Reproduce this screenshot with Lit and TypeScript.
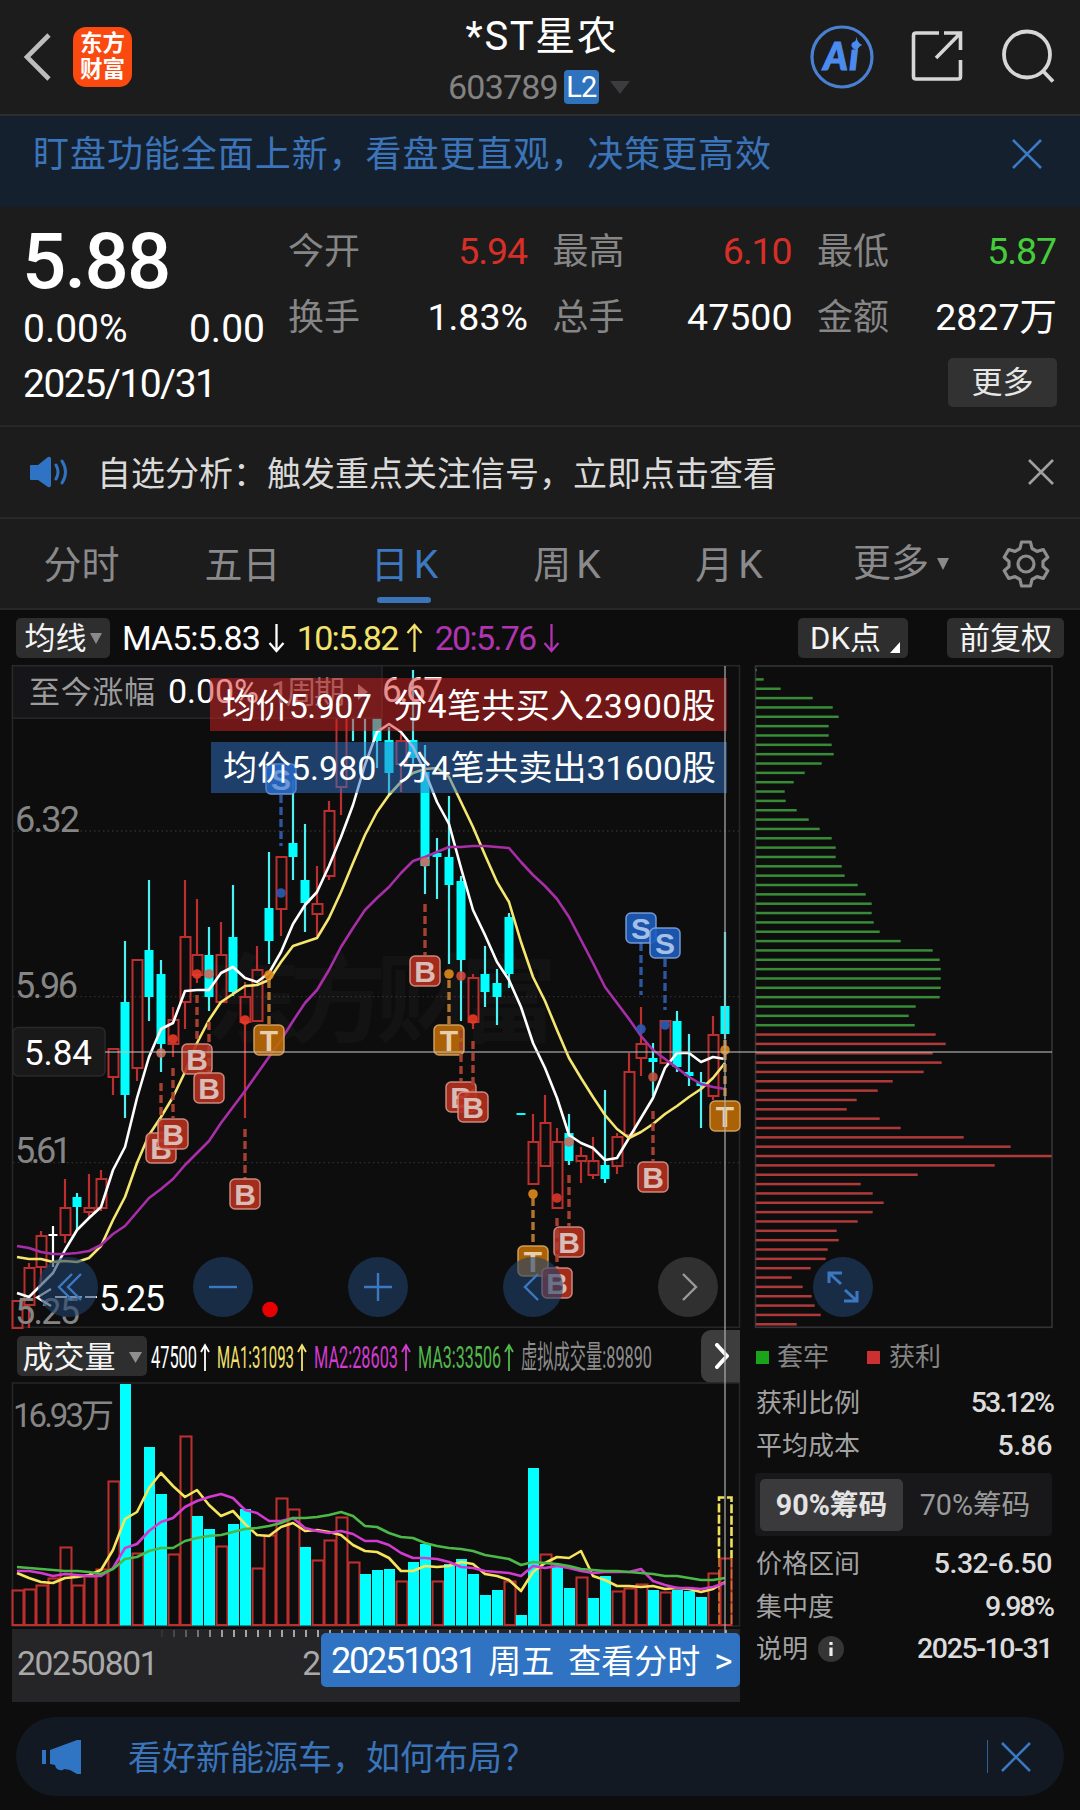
import { LitElement, html, svg, css } from "lit";
import { customElement } from "lit/decorators.js";

const X0 = 17;
const STEP = 12;
const xAt = (i: number) => X0 + STEP * i;

/* kind (r = hollow rise, c = filled fall, w = doji), high, body top, body bottom, low */
type Candle = [string, number, number, number, number];
const CANDLES: Candle[] = [
  ["r", 1300, 1300, 1328, 1328], ["r", 1263, 1267, 1305, 1328], ["r", 1231, 1235, 1267, 1283], ["w", 1226, 1234, 1236, 1267],
  ["r", 1179, 1207, 1235, 1243], ["c", 1193, 1197, 1207, 1230], ["r", 1174, 1207, 1212, 1217], ["r", 1170, 1178, 1208, 1211],
  ["r", 1048, 1048, 1077, 1095], ["c", 941, 1002, 1095, 1118], ["r", 959, 959, 1068, 1081], ["c", 880, 950, 997, 1021],
  ["c", 960, 974, 1044, 1072], ["r", 1007, 1019, 1044, 1057], ["r", 880, 936, 1002, 1029], ["r", 899, 954, 975, 983],
  ["c", 927, 955, 997, 1011], ["r", 922, 954, 1002, 1002], ["c", 885, 937, 992, 996], ["r", 982, 996, 1022, 1118],
  ["r", 946, 969, 1021, 1021], ["c", 852, 908, 941, 964], ["r", 856, 856, 909, 936], ["c", 780, 843, 857, 880],
  ["c", 824, 880, 903, 932], ["r", 866, 903, 914, 936], ["r", 801, 810, 876, 880], ["r", 700, 700, 787, 815],
  ["c", 700, 700, 705, 741], ["c", 700, 700, 705, 756], ["c", 700, 700, 741, 768], ["c", 727, 740, 773, 794],
  ["r", 732, 740, 764, 792], ["c", 670, 740, 758, 766], ["c", 745, 772, 866, 894], ["c", 838, 853, 857, 899],
  ["c", 796, 857, 885, 964], ["c", 876, 881, 960, 1021], ["r", 974, 977, 1022, 1029], ["c", 946, 974, 992, 1007],
  ["c", 969, 983, 997, 1025], ["c", 913, 917, 974, 988], ["c", 1113, 1113, 1115, 1115], ["r", 1114, 1141, 1184, 1184],
  ["r", 1095, 1122, 1166, 1166], ["r", 1128, 1141, 1208, 1208], ["c", 1114, 1133, 1161, 1165], ["r", 1147, 1155, 1161, 1183],
  ["r", 1137, 1160, 1175, 1179], ["c", 1090, 1165, 1179, 1183], ["r", 1133, 1136, 1166, 1174], ["r", 1053, 1071, 1135, 1135],
  ["r", 1007, 1043, 1058, 1076], ["c", 1043, 1058, 1062, 1096], ["r", 1020, 1020, 1063, 1063], ["c", 1011, 1021, 1067, 1072],
  ["c", 1034, 1072, 1076, 1086], ["c", 1072, 1082, 1086, 1128], ["r", 1016, 1034, 1096, 1100], ["c", 932, 1006, 1034, 1039],
];

const MA5 = [1293, 1297, 1285, 1273, 1250, 1230, 1218, 1207, 1170, 1147, 1098, 1057, 1029, 1023, 991, 990, 990, 973, 967, 978, 982, 973, 952, 924, 905, 892, 866, 837, 805, 765, 732, 724, 732, 747, 772, 802, 824, 868, 910, 935, 962, 980, 1007, 1043, 1068, 1098, 1135, 1143, 1148, 1160, 1158, 1138, 1118, 1098, 1068, 1053, 1053, 1062, 1057, 1059];
const MA10 = [1257, 1259, 1259, 1262, 1261, 1262, 1258, 1246, 1220, 1197, 1163, 1135, 1117, 1097, 1072, 1043, 1020, 1002, 994, 986, 985, 980, 962, 946, 942, 938, 918, 892, 863, 835, 812, 795, 782, 773, 769, 768, 777, 802, 827, 855, 882, 902, 942, 977, 1001, 1030, 1058, 1078, 1097, 1115, 1129, 1138, 1132, 1124, 1114, 1106, 1097, 1089, 1078, 1063];
const MA20 = [1246, 1248, 1252, 1254, 1254, 1253, 1251, 1245, 1234, 1226, 1212, 1198, 1189, 1179, 1165, 1153, 1141, 1123, 1107, 1091, 1074, 1057, 1040, 1021, 1003, 990, 970, 947, 928, 910, 898, 887, 873, 861, 857, 852, 847, 847, 846, 846, 847, 848, 862, 875, 886, 899, 917, 940, 963, 987, 1003, 1019, 1036, 1050, 1059, 1068, 1077, 1084, 1087, 1089];

const VOLUMES: [string, number][] = [
  ["r", 1590], ["r", 1589], ["r", 1585], ["r", 1578], ["r", 1547], ["r", 1585], ["r", 1576], ["r", 1569], ["r", 1481], ["c", 1384],
  ["r", 1553], ["c", 1447], ["c", 1494], ["r", 1554], ["r", 1436], ["c", 1516], ["c", 1529], ["r", 1546], ["c", 1524], ["c", 1509],
  ["r", 1568], ["r", 1535], ["r", 1498], ["r", 1509], ["c", 1547], ["r", 1560], ["r", 1540], ["r", 1517], ["r", 1562], ["c", 1574],
  ["c", 1570], ["c", 1569], ["r", 1581], ["c", 1562], ["c", 1544], ["r", 1581], ["c", 1564], ["c", 1559], ["c", 1574], ["c", 1595],
  ["c", 1590], ["r", 1581], ["c", 1615], ["c", 1468], ["r", 1554], ["c", 1566], ["c", 1588], ["r", 1577], ["c", 1598], ["c", 1576],
  ["r", 1591], ["r", 1588], ["r", 1584], ["c", 1590], ["r", 1592], ["c", 1590], ["c", 1591], ["c", 1597], ["r", 1573], ["r", 1558],
];
const VMA1 = [1573, 1578, 1582, 1583, 1578, 1577, 1575, 1570, 1550, 1519, 1512, 1488, 1473, 1486, 1497, 1490, 1505, 1516, 1511, 1524, 1535, 1536, 1527, 1523, 1531, 1530, 1532, 1535, 1545, 1551, 1552, 1558, 1571, 1571, 1566, 1567, 1566, 1562, 1564, 1574, 1576, 1580, 1591, 1572, 1563, 1557, 1558, 1551, 1576, 1580, 1586, 1586, 1587, 1586, 1589, 1588, 1589, 1592, 1589, 1582];
const VMA2 = [1571, 1571, 1573, 1576, 1574, 1575, 1576, 1576, 1568, 1548, 1544, 1531, 1522, 1518, 1507, 1501, 1497, 1494, 1498, 1510, 1513, 1521, 1521, 1518, 1528, 1531, 1533, 1531, 1534, 1541, 1541, 1545, 1553, 1558, 1558, 1559, 1562, 1567, 1568, 1571, 1572, 1573, 1576, 1566, 1568, 1566, 1568, 1571, 1573, 1572, 1572, 1572, 1569, 1581, 1585, 1588, 1588, 1589, 1587, 1583];
const VMA3 = [1567, 1568, 1569, 1570, 1571, 1571, 1572, 1574, 1569, 1559, 1557, 1551, 1548, 1548, 1541, 1538, 1536, 1535, 1532, 1529, 1528, 1526, 1523, 1518, 1518, 1517, 1515, 1512, 1516, 1526, 1527, 1533, 1537, 1538, 1543, 1546, 1548, 1549, 1551, 1555, 1557, 1559, 1565, 1562, 1563, 1564, 1566, 1569, 1570, 1571, 1571, 1572, 1573, 1574, 1576, 1576, 1578, 1580, 1580, 1578];

/* letter, candle index, badge centre, dash start, dash end, dot height, dot colour */
type Mark = [string, number, number, number, number, number, string];
const ON_RISE = "#ea3a26";
const ON_FALL = "#c9695a";
const MARKS: Mark[] = [
  ["B", 12, 1148, 1083, 1133, 1053, ON_FALL],
  ["B", 13, 1134, 1068, 1118, 1039, ON_RISE],
  ["B", 15, 1059, 995, 1043, 974, ON_RISE],
  ["B", 16, 1088, 1022, 1073, 974, ON_FALL],
  ["B", 19, 1194, 1129, 1179, 1020, ON_RISE],
  ["T", 21, 1040, 980, 1025, 975, "#e08a1a"],
  ["S", 22, 779, 795, 846, 893, "#2c5cb4"],
  ["B", 34, 971, 904, 955, 862, ON_FALL],
  ["T", 36, 1040, 980, 1025, 974, "#e08a1a"],
  ["B", 37, 1097, 1030, 1081, 976, "#d4483a"],
  ["B", 38, 1107, 1041, 1091, 1019, ON_RISE],
  ["T", 43, 1261, 1198, 1245, 1194, "#e08a1a"],
  ["B", 46, 1242, 1175, 1226, 1142, ON_FALL],
  ["B", 45, 1283, 1218, 1268, 1198, "#d8362a"],
  ["S", 52, 928, 943, 995, 1029, "#2c5cb4"],
  ["S", 54, 943, 959, 1010, 1025, "#2c5cb4"],
  ["B", 53, 1177, 1111, 1161, 1077, "#c0503e"],
  ["T", 59, 1116, 1040, 1100, 1050, "#e08a1a"],
];
const MARK_FILL: Record<string, string> = { B: "#b5301f", T: "#bd6a05", S: "#1c5dbd" };
const MARK_EDGE: Record<string, string> = { B: "#d6968c", T: "#d9a766", S: "#7fa3dc" };
const DASH: Record<string, string> = { B: "#a8402f", T: "#b3742e", S: "#2b56a0" };

const LOCKED = [1, 8, 25, 57, 77, 83, 73, 73, 76, 78, 66, 49, 38, 29, 30, 41, 53, 64, 76, 80, 80, 86, 89, 102, 110, 116, 116, 118, 124, 145, 177, 184, 185, 185, 185, 184, 160, 153, 159];
const PROFIT = [180, 190, 177, 186, 168, 137, 122, 101, 91, 124, 145, 208, 255, 296, 239, 162, 105, 117, 128, 117, 102, 81, 83, 72, 70, 55, 36, 47, 56, 59, 65, 41];

const points = (ys: number[]) => ys.map((y, i) => `${xAt(i)},${y}`).join(" ");

@customElement("price-chart")
class PriceChart extends LitElement {
  static styles = css`
    :host { display: block; }
    svg { display: block; }
    text { font-family: Roboto, "Noto Sans CJK SC", sans-serif; }
    .line { fill: none; stroke-width: 2.6; stroke-linejoin: round; }
    .axis { font-size: 36px; fill: #858585; }
    .grid { stroke: #2e2e2e; stroke-width: 1.3; stroke-dasharray: 1.5 3; }
    .frame { fill: none; stroke: #262628; stroke-width: 1.6; }
    .mark { font-family: "Liberation Sans", sans-serif; font-size: 30px; font-weight: 700; fill: #d9bcb6; text-anchor: middle; }
    .mark.S { fill: #a6bfe6; }
    .mark.T { fill: #e6cfae; }
    .watermark { font-size: 96px; font-weight: 700; fill: #fff; opacity: 0.022; }
  `;

  private candle([kind, high, top, bottom, low]: Candle, i: number) {
    const x = xAt(i);
    if (kind === "w") {
      return svg`<path d="M${x} ${high}V${low}M${x - 4.5} 1235H${x + 4.5}" stroke="#fff" stroke-width="2.2" fill="none"/>`;
    }
    if (kind === "c") {
      return svg`<path d="M${x} ${high}V${low}" stroke="#4df3f3" stroke-width="2.2"/>
        <rect x=${x - 4.5} y=${top} width="9" height=${bottom - top} fill="#0ff"/>`;
    }
    return svg`<path d="M${x} ${high}V${top}M${x} ${bottom}V${low}" stroke="#bb2f2f" stroke-width="2.2"/>
      <rect x=${x - 4.5} y=${top + 1} width="10" height=${bottom - top - 1} fill="none" stroke="#bb2f2f" stroke-width="2"/>`;
  }

  private mark([letter, i, cy, from, to, dot, color]: Mark) {
    const x = xAt(i);
    return svg`<path d="M${x} ${from}V${to}" stroke=${DASH[letter]} stroke-width="3.4" stroke-dasharray="8 4"/>
      <circle cx=${x} cy=${dot} r="4.8" fill=${color} opacity=".9"/>
      <rect x=${x - 15} y=${cy - 15} width="30" height="30" rx="5" fill=${MARK_FILL[letter]} stroke=${MARK_EDGE[letter]}
        stroke-width="1.5" fill-opacity=".9" stroke-opacity=".9"/>
      <text class="mark ${letter}" x=${x} y=${cy + 10.8}>${letter}</text>`;
  }

  render() {
    return html`<svg width="742" height="670" viewBox="0 660 742 670">
      <rect class="frame" x="12.5" y="665.7" width="727" height="661.6" />
      <path class="grid" d="M13 831H739M13 996.7H739M13 1162.7H739" />
      <text class="watermark" x="205" y="1034" textLength="352">东方财富</text>
      ${CANDLES.map((c, i) => this.candle(c, i))}
      <polyline class="line" points=${points(MA5)} stroke="#fff" />
      <polyline class="line" points=${points(MA10)} stroke="#f5e670" />
      <polyline class="line" points=${points(MA20)} stroke="#a82ea8" />
      <rect x="12.5" y="665.7" width="369.5" height="52.5" fill="#161618" stroke="#29292b" stroke-width="1.4" />
      <text x="29" y="703" font-size="31" fill="#9c9c9c" textLength="126">至今涨幅</text>
      <text x="168" y="702.5" font-size="34" fill="#fff" textLength="91">0.00%</text>
      <text x="271" y="703" font-size="31" fill="#8f8f8f" textLength="74">1周期</text>
      <path d="M358 684L368 692L358 700Z" fill="#9a9a9a" />
      <text x="382" y="702" font-size="35" fill="#fff" textLength="61">6.67</text>
      ${[["6.32", 831.5, 65], ["5.96", 997.5, 63], ["5.61", 1162.5, 57], ["5.25", 1324, 65]].map(
        ([t, y, w]) => svg`<text class="axis" x="15" y=${y} textLength=${w}>${t}</text>`,
      )}
      <path d="M51 1289L37 1297.5L51 1306" stroke="#fff" stroke-width="2.2" fill="none" />
      <path d="M55 1297H98" stroke="#fff" stroke-width="2.2" stroke-dasharray="12 3" />
      <text x="99" y="1311" font-size="36" fill="#fff" textLength="66">5.25</text>
      ${MARKS.map((m) => this.mark(m))}
      <rect x="13" y="1027.5" width="92" height="48.5" rx="5" fill="#19191a" stroke="#29292b" stroke-width="1.5" />
      <text x="24" y="1064.5" font-size="35" fill="#fff" textLength="68">5.84</text>
      <circle cx="270" cy="1309.5" r="7.8" fill="#e80000" />
    </svg>`;
  }
}

@customElement("volume-chart")
class VolumeChart extends LitElement {
  static styles = css`
    :host { display: block; }
    svg { display: block; }
    text { font-family: Roboto, "Noto Sans CJK SC", sans-serif; }
    .line { fill: none; stroke-width: 2.6; stroke-linejoin: round; }
  `;

  render() {
    return html`<svg width="742" height="247" viewBox="0 1382 742 247">
      <rect x="12.5" y="1383" width="727" height="243" fill="none" stroke="#262628" stroke-width="1.6" />
      ${VOLUMES.map(([kind, y], i) => {
        const x = xAt(i);
        return kind === "c"
          ? svg`<rect x=${x - 5} y=${y} width="11" height=${1625.5 - y} fill="#0ff"/>`
          : svg`<rect x=${x - 4.5} y=${y + 0.5} width="11" height=${1624.5 - y} fill="none" stroke="#bb2f2f" stroke-width="2.1"/>`;
      })}
      <path d="M719 1558V1497.5H731.5V1558" stroke="#f0e05a" stroke-width="2.6" fill="none" stroke-dasharray="9 2.4" />
      <path d="M719 1558V1625M731.5 1558V1625" stroke="#d07a30" stroke-width="1.6" fill="none" stroke-dasharray="9 2.4" />
      <polyline class="line" points=${points(VMA1)} stroke="#f5e45c" />
      <polyline class="line" points=${points(VMA2)} stroke="#d33bd0" />
      <polyline class="line" points=${points(VMA3)} stroke="#4cb848" />
      <text x="13" y="1426.500" font-size="33" fill="#858585" textLength="101">16.93万</text>
    </svg>`;
  }
}

@customElement("chip-distribution")
class ChipDistribution extends LitElement {
  static styles = css`
    :host { display: block; }
    svg { display: block; }
  `;

  render() {
    const bar = (color: string, offset: number) => (w: number, i: number) =>
      svg`<rect x="755.7" y=${668.8 + 9.346 * (i + offset)} width=${w} height="2.5" fill=${color}/>`;
    return html`<svg width="300" height="670" viewBox="754 660 300 670">
      <rect x="755.5" y="666" width="296.5" height="661.3" fill="none" stroke="#343436" stroke-width="1.6" />
      ${LOCKED.map(bar("#388c38", 0))} ${PROFIT.map(bar("#b03a3a", LOCKED.length))}
    </svg>`;
  }
}

@customElement("app-root")
class AppRoot extends LitElement {
  static styles = css`
    :host {
      display: block; width: 1080px; height: 1810px; overflow: hidden; background: #0d0d0d; color: #fff;
      font-family: Roboto, "Noto Sans CJK SC", sans-serif; line-height: 1; white-space: nowrap;
    }
    * { box-sizing: border-box; }
    svg { display: block; flex: none; }
    .head { height: 116px; background: #1c1c1c; border-bottom: 2px solid #2b2d2e; display: grid; grid-template-columns: 360px 1fr 360px; }
    .left { display: flex; align-items: center; padding-left: 22px; gap: 21px; }
    .logo {
      width: 59px; height: 60px; border-radius: 13px; background: #fb4a0f; font-weight: 700; font-size: 22.5px; line-height: 26px;
      text-align: center; white-space: pre-line; padding-top: 3px;
    }
    .title { display: flex; flex-direction: column; align-items: center; padding-top: 16px; }
    .name { font-size: 40px; line-height: 42px; letter-spacing: 1.6px; padding-left: 4px; }
    .code { display: flex; align-items: center; font-size: 34px; color: #828282; margin-top: 12px; line-height: 34px; letter-spacing: -0.8px; margin-right: 2px; }
    .l2 { background: #2f72bd; color: #fff; border-radius: 4px; font-size: 29px; width: 35px; height: 34px; text-align: center; margin-left: 6px; }
    .caret { width: 0; height: 0; border: 10px solid transparent; border-top: 13px solid #3c3c3e; border-bottom: 0; margin-left: 11px; }
    .right { display: flex; align-items: center; justify-content: flex-end; padding: 0 25px 3px 0; gap: 38px; }
    .ai { margin: 2px -1px 0 0; }
    .banner { height: 91px; background: #15202e; display: flex; justify-content: space-between; padding: 21px 38px 0 33px; color: #3c74b9; font-size: 36px; line-height: 36px; letter-spacing: 0.95px; }
    .banner svg { margin-top: 2px; }
    .quote { height: 220px; background: #1c1c1c; border-bottom: 2px solid #272727; display: grid; grid-template-columns: 265px 1fr; padding: 0 23px 0 23px; }
    .price { font-size: 78px; font-weight: 500; line-height: 78px; margin: 16px 0 0 -1px; letter-spacing: -1.8px; }
    .change { display: flex; justify-content: space-between; width: 242px; font-size: 39px; line-height: 40px; margin-top: 8px; }
    .day { font-size: 39px; line-height: 40px; margin-top: 15px; letter-spacing: -1.5px; }
    .stats { display: grid; grid-template-columns: 240px 240px 240px; column-gap: 24.5px; grid-template-rows: 66px 66px; padding-top: 12px; }
    .stat { display: flex; justify-content: space-between; align-items: center; font-size: 37.5px; }
    .stat span { font-size: 36px; color: #868686; }
    .stat .tight { letter-spacing: -1.1px; padding-right: 1px; }
    .rise { color: #d62f27; }
    .fall { color: #45cc3a; }
    .more { width: 109px; height: 49px; border-radius: 5px; background: #323233; color: #e6e6e6; font-size: 31px; line-height: 49px; text-align: center; margin: 7px 0 0 auto; }
    .notice { height: 92px; background: #1c1c1c; border-bottom: 2px solid #292929; display: flex; align-items: center; padding: 0 26px 0 29px; }
    .notice p { margin: 0 auto 0 28px; padding-top: 3px; font-size: 34px; color: #dadada; }
    .tabs { height: 91px; background: #1c1c1c; border-bottom: 2px solid #272727; position: relative; display: grid; grid-template-columns: 161px 161px 163px 162px 162px 161px 1fr; padding-left: 1px; align-items: center; }
    .tab { text-align: center; font-size: 38px; color: #8a8a8c; height: 89px; line-height: 93px; }
    .tab i { font-style: normal; margin-left: 5px; font-size: 39px; }
    .tab.on { color: #3c79c2; position: relative; }
    .tab.on::after { content: ""; position: absolute; left: 54px; bottom: 5px; width: 54px; height: 6px; border-radius: 3px; background: #3c74b9; }
    .tab.drop { display: flex; align-items: center; justify-content: flex-end; gap: 8px; width: 139px; }
    .gear { justify-self: center; }
    .indicators { height: 50px; display: flex; align-items: center; padding: 5px 16px 0; font-size: 34px; }
    .chip { height: 40px; border-radius: 5px; background: #2e2e2f; display: flex; align-items: center; justify-content: center; font-size: 31px; color: #f4f4f4; padding-top: 2px; }
    .ma { display: flex; align-items: center; gap: 8px; letter-spacing: -1px; padding-top: 1px; }
    .avg { width: 94px; gap: 3px; margin-right: 12px; }
    .ma.yellow { color: #f3e26c; margin: 0 12px; letter-spacing: -1.7px; }
    .ma.purple { color: #b034b0; letter-spacing: -1.7px; }
    .dk { width: 110px; margin: 0 39px 0 auto; gap: 9px; padding-left: 4px; }
    .dk svg { margin-top: 17px; }
    .adjust { width: 117px; }
    .body { display: grid; grid-template-columns: 754px 300px; position: relative; }
    .volrow { height: 52px; display: flex; align-items: center; padding-left: 17px; }
    .volname { width: 130px; gap: 13px; }
    .volnext { width: 39px; height: 53px; background: #3d3d3d; border-radius: 10px 0 0 10px; display: grid; place-items: center; padding-left: 3px; }
    .vals text { font-family: Roboto, "Noto Sans CJK SC", sans-serif; font-size: 32px; }
    .ruler { margin-left: 12px; width: 728px; height: 73px; background: #252527; color: #a9a9a9; font-size: 33.5px; display: flex; flex-direction: column; }
    .dates { display: flex; gap: 145px; padding: 6px 0 0 5px; letter-spacing: -1.3px; line-height: 40px; }
    .over { position: absolute; }
    .hline { left: 105px; top: 391px; width: 947px; height: 2px; background: rgba(190, 190, 190, 0.55); }
    .vline { left: 724px; top: 6px; width: 2px; height: 967px; background: rgba(175, 175, 175, 0.6); }
    .trade { display: flex; justify-content: space-between; align-items: center; font-size: 34px; color: #fff; }
    .buy { left: 210px; top: 18px; width: 517px; height: 53px; background: rgba(216, 34, 34, 0.5); padding: 2px 11px 0 12px; }
    .buy b:first-child { letter-spacing: -0.6px; }
    .buy b:last-child { letter-spacing: 0.35px; }
    .sell { left: 211px; top: 82px; width: 516px; height: 51px; background: rgba(47, 113, 199, 0.5); padding: 0 11px 0 12px; }
    .trade b { font-weight: 400; }
    .tools { left: 38px; top: 597px; display: flex; gap: 95px; }
    .round { width: 60px; height: 60px; border-radius: 50%; background: rgba(32, 65, 108, 0.6); display: grid; place-items: center; }
    .round.grey { background: rgba(60, 60, 60, 0.75); }
    .tag { left: 321px; top: 973px; width: 419px; height: 54px; border-radius: 5px; background: #2f73c2; font-size: 33px; display: flex; align-items: center; padding: 2px 0 0 10px; gap: 14px; }
    .tag .num { font-size: 36px; letter-spacing: -2.2px; margin-right: -1px; }
    .tag .go { font-size: 35px; }
    .legend { display: flex; align-items: center; height: 52px; padding: 2px 0 0 2px; font-size: 26px; color: #858585; }
    .legend u { width: 13px; height: 13px; background: #1aa41a; margin-right: 8px; }
    .legend .won { background: #cc3030; margin-left: 38px; margin-right: 9px; }
    .row { display: flex; align-items: center; justify-content: space-between; height: 42.5px; padding: 0 0 0 2px; font-size: 26px; color: #a2a2a2; width: 298px; }
    .row b { font-size: 28.5px; font-weight: 500; color: #dcdcdc; letter-spacing: -0.5px; }
    .row .pct { letter-spacing: -1.9px; margin-right: -1px; }
    .row .date { letter-spacing: -1.4px; }
    .note { display: flex; align-items: center; gap: 10px; }
    .switch { margin: 6px 0 7px 1px; width: 297px; height: 63px; padding: 6px 5px; border-radius: 4px; background: #18181a; display: grid; grid-template-columns: 143px 1fr; font-size: 28.7px; color: #9a9a9a; line-height: 52px; text-align: center; }
    .switch .on { border-radius: 5px; background: #3a3a3c; color: #e3e3e3; font-weight: 700; }
    .ad { margin: 15px 16px 0; height: 79px; border-radius: 40px; background: #121922; color: #3a74ba; display: flex; align-items: center; padding: 0 33px 0 26px; font-size: 34px; }
    .ad p { margin: 0 auto 0 47px; padding-top: 3px; }
    .sep { width: 1.5px; height: 33px; background: #2f6096; margin-right: 13px; }
  `;

  private cross(size: number, color: string, w = 2.6) {
    return html`<svg width=${size} height=${size} viewBox="0 0 ${size} ${size}">
      <path d="M1 1L${size - 1} ${size - 1}M${size - 1} 1L1 ${size - 1}" stroke=${color} stroke-width=${w} />
    </svg>`;
  }

  private arrow(up: boolean) {
    return html`<svg width="17" height="30" viewBox="0 0 17 30" fill="none" stroke="currentColor" stroke-width="2.3">
      <path d=${up ? "M8.5 29V3M1.5 10L8.5 2L15.5 10" : "M8.5 1V27M1.5 20L8.5 28L15.5 20"} />
    </svg>`;
  }

  private reading(text: string, x: number, w: number, arrowX: number, color: string) {
    return svg`<text x=${x} y="38" textLength=${w} lengthAdjust="spacingAndGlyphs" fill=${color}>${text}</text>
      ${arrowX ? svg`<path d="M${arrowX} 41V16M${arrowX - 4} 22L${arrowX} 15L${arrowX + 4} 22" stroke=${color} stroke-width="1.8" fill="none"/>` : ""}`;
  }

  private stat(label: string, value: string, cls = "") {
    return html`<div class="stat"><span>${label}</span><div class=${cls}>${value}</div></div>`;
  }

  private round(icon: unknown, grey = false) {
    return html`<div class="round ${grey ? "grey" : ""}">
      <svg width="34" height="34" viewBox="0 0 34 34" fill="none" stroke=${grey ? "#9a9a9a" : "#3c78c2"} stroke-width="2.4">${icon}</svg>
    </div>`;
  }

  render() {
    return html`
      <header class="head">
        <div class="left">
          <svg width="30" height="50" viewBox="0 0 30 50"><path d="M27 3L5 25L27 47" fill="none" stroke="#bdbdbd" stroke-width="4.6" /></svg>
          <div class="logo">${"东方\n财富"}</div>
        </div>
        <div class="title">
          <div class="name">*ST星农</div>
          <div class="code">603789<div class="l2">L2</div><div class="caret"></div></div>
        </div>
        <div class="right">
          <svg class="ai" width="64" height="64" viewBox="0 0 64 64">
            <circle cx="32" cy="32" r="30" fill="none" stroke="#4a80d2" stroke-width="3.2" />
            <text x="13.500" y="45" font-size="37" font-weight="900" font-style="italic" font-family="Lato, sans-serif" fill="#4c8bee"
              stroke="#4c8bee" stroke-width="1.2" textLength="35">Ai</text>
            <path d="M46.500 12Q47.500 18.500 52.500 20Q47.500 21.500 46.500 28Q45.500 21.500 41 20Q45.500 18.500 46.500 12Z" fill="#4c8bee" />
          </svg>
          <svg width="52" height="52" viewBox="0 0 52 52" fill="none" stroke="#d6d6d6" stroke-width="3.6">
            <path d="M28 3H5Q2.500 3 2.500 5.500V46.500Q2.500 49 5 49H47Q49.500 49 49.500 46.500V30M33 3H49.500V20M49.500 3L25 28" />
          </svg>
          <svg width="54" height="54" viewBox="0 0 54 54" fill="none" stroke="#d6d6d6" stroke-width="3.8">
            <circle cx="26" cy="25.500" r="23" /><path d="M42 42L52 52.500" />
          </svg>
        </div>
      </header>
      <div class="banner"><span>盯盘功能全面上新，看盘更直观，决策更高效</span>${this.cross(30, "#3c7ac4")}</div>

      <section class="quote">
        <div>
          <div class="price">5.88</div>
          <div class="change"><span>0.00%</span><span>0.00</span></div>
          <div class="day">2025/10/31</div>
        </div>
        <div>
          <div class="stats">
            ${this.stat("今开", "5.94", "rise tight")} ${this.stat("最高", "6.10", "rise tight")} ${this.stat("最低", "5.87", "fall tight")}
            ${this.stat("换手", "1.83%")} ${this.stat("总手", "47500")} ${this.stat("金额", "2827万")}
          </div>
          <div class="more">更多</div>
        </div>
      </section>

      <div class="notice">
        <svg width="40" height="32" viewBox="0 0 40 32">
          <path d="M1 10Q1 9 2 9H9L19 1Q22 0 22 3V29Q22 32 19 31L9 24H2Q1 24 1 23Z" fill="#2f74c4" />
          <path d="M27 9Q31 16 27 23M33 5Q40 16 33 27" fill="none" stroke="#2f74c4" stroke-width="3" stroke-linecap="round" />
        </svg>
        <p>自选分析：触发重点关注信号，立即点击查看</p>
        ${this.cross(26, "#a0a0a0")}
      </div>

      <nav class="tabs">
        <div class="tab">分时</div>
        <div class="tab">五日</div>
        <div class="tab on">日<i>K</i></div>
        <div class="tab">周<i>K</i></div>
        <div class="tab">月<i>K</i></div>
        <div class="tab drop">更多<svg width="12" height="12" viewBox="0 0 12 12"><path d="M0 0H12L6 12Z" fill="#8a8a8c" /></svg></div>
        <svg class="gear" width="48" height="48" viewBox="0 0 48 48" fill="none" stroke="#8e8e90" stroke-width="3.2" stroke-linejoin="round">
          <path d="M19.500 2H28.500L30 8.500L35 11.400L41.300 9.500L45.800 17.200L41 21.500V26.500L45.800 30.800L41.300 38.500L35 36.600L30 39.500L28.500 46H19.500L18 39.500L13 36.600L6.700 38.500L2.200 30.800L7 26.500V21.500L2.200 17.200L6.700 9.500L13 11.400L18 8.500Z" />
          <circle cx="24" cy="24" r="8" />
        </svg>
      </nav>

      <div class="indicators">
        <div class="chip avg">均线<svg width="12" height="12" viewBox="0 0 12 12"><path d="M0 0H12L6 11Z" fill="#8a8a8c" /></svg></div>
        <div class="ma">MA5:5.83${this.arrow(false)}</div>
        <div class="ma yellow">10:5.82${this.arrow(true)}</div>
        <div class="ma purple">20:5.76${this.arrow(false)}</div>
        <div class="chip dk">DK点<svg width="10" height="11" viewBox="0 0 10 11"><path d="M10 0V11H0Z" fill="#fff" /></svg></div>
        <div class="chip adjust">前复权</div>
      </div>

      <main class="body">
        <div>
          <price-chart></price-chart>
          <div class="volrow">
            <div class="chip volname">成交量<svg width="13" height="11" viewBox="0 0 13 11"><path d="M0 0H13L6.500 11Z" fill="#8f8f8f" /></svg></div>
            <svg class="vals" width="554" height="52" viewBox="147 0 554 52">
              ${this.reading("47500", 151, 46, 205, "#fff")} ${this.reading("MA1:31093", 217, 77, 302, "#f3e26c")}
              ${this.reading("MA2:28603", 314, 84, 406, "#d33bd0")} ${this.reading("MA3:33506", 418, 83, 509, "#52b94c")}
              ${this.reading("虚拟成交量:89890", 521, 131, 0, "#8c8c8c")}
            </svg>
            <div class="volnext"><svg width="14" height="26" viewBox="0 0 14 26"><path d="M2 2L12 13L2 24" fill="none" stroke="#fff" stroke-width="4" stroke-linecap="round" stroke-linejoin="round" /></svg></div>
          </div>
          <volume-chart></volume-chart>
          <div class="ruler">
            <svg width="728" height="9" viewBox="12 0 728 9">
              ${Array.from({ length: 48 }, (_, k) => {
                const x = 161 + STEP * k;
                return svg`<rect x=${x} y="1" width="2" height="7" fill="#b5b5b5" opacity=${Math.min(0.9, 0.1 + k * 0.15)}/>`;
              })}
            </svg>
            <div class="dates"><span>20250801</span><span>2</span></div>
          </div>
        </div>

        <aside>
          <chip-distribution></chip-distribution>
          <div class="legend"><u></u>套牢<u class="won"></u>获利</div>
          <div class="row">获利比例<b class="pct">53.12%</b></div>
          <div class="row">平均成本<b>5.86</b></div>
          <div class="switch"><span class="on">90%筹码</span><span>70%筹码</span></div>
          <div class="row">价格区间<b>5.32-6.50</b></div>
          <div class="row">集中度<b class="pct">9.98%</b></div>
          <div class="row">
            <span class="note">说明<svg width="26" height="26" viewBox="0 0 26 26"><circle cx="13" cy="13" r="13" fill="#353535" /><path d="M13 11.500V20M13 6V9" stroke="#eee" stroke-width="3.2" /></svg></span>
            <b class="date">2025-10-31</b>
          </div>
        </aside>

        <div class="over trade buy"><b>均价5.907</b><b>分4笔共买入23900股</b></div>
        <div class="over trade sell"><b>均价5.980</b><b>分4笔共卖出31600股</b></div>
        <div class="over hline"></div>
        <div class="over vline"></div>
        <div class="over tools">
          ${this.round(svg`<path d="M21 4L8 17L21 30M30 4L17 17L30 30"/>`)} ${this.round(svg`<path d="M3 17H31"/>`)}
          ${this.round(svg`<path d="M3 17H31M17 3V31"/>`)} ${this.round(svg`<path d="M22 4L9 17L22 30"/>`)}
          ${this.round(svg`<path d="M12 4L25 17L12 30"/>`, true)}
          ${this.round(svg`<path d="M3 13V3H16M3 3L15 14M31 21V31H18M31 31L19 20" stroke-width="3"/>`)}
        </div>
        <div class="over tag"><span class="num">20251031</span><span>周五</span><span>查看分时</span><span class="go">&gt;</span></div>
      </main>

      <div class="ad">
        <svg width="39" height="36" viewBox="0 0 39 36" fill="#3074c4">
          <path d="M0 11H4V25H0ZM8 11L35 1H39V35H35L28 31L22 30L21 31Q17 32 14 29L13 26L8 25Z" />
        </svg>
        <p>看好新能源车，如何布局？</p>
        <span class="sep"></span>
        ${this.cross(30, "#3a78c2")}
      </div>
    `;
  }
}
